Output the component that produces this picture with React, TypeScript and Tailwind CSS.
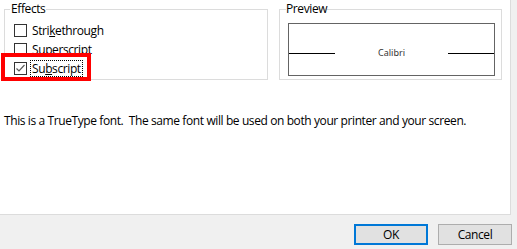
import React from 'react';

const FONT = { fontFamily: '"Open Sans", "Noto Sans", sans-serif' };

function Check({ checked }: { checked?: boolean }) {
  return (
    <span className="flex h-[13px] w-[13px] flex-shrink-0 items-center justify-center border border-[#333333] bg-white">
      {checked && (
        <svg width="11" height="11" viewBox="0 0 11 11" fill="none">
          <polyline points="1.5,5.5 4,8 9.5,2" stroke="#5a5a5a" strokeWidth="1.2" />
        </svg>
      )}
    </span>
  );
}

function Option({ children, checked, focused }: { children: React.ReactNode; checked?: boolean; focused?: boolean }) {
  return (
    <div className="flex h-[19px] items-center gap-[3px] pl-[9px]">
      <Check checked={checked} />
      <span
        className={
          focused
            ? 'border border-dotted border-black px-[1px] leading-[15px]'
            : 'px-[2px] leading-[15px]'
        }
      >
        {children}
      </span>
    </div>
  );
}

export default function App() {
  return (
    <div
      className="relative h-[249px] w-[517px] overflow-hidden bg-[#f0f0f0] text-[12px] tracking-[-0.4px] text-black"
      style={FONT}
    >
      <div className="h-[215px] w-[511px] border-r border-b border-[#dcdcdc] bg-white">
        <div className="flex gap-[11px] pl-[4px] pt-[2px]">
          {/* Effects */}
          <fieldset className="h-[78px] w-[264px] border border-[#dcdcdc] px-0 pt-0">
            <legend className="ml-[5px] px-[1px] leading-[14px]">Effects</legend>
            <div className="pt-[5px]">
              <Option>
                Stri<u>k</u>ethrough
              </Option>
              <Option>Superscript</Option>
              <Option checked focused>
                Su<u>b</u>script
              </Option>
            </div>
          </fieldset>

          {/* Preview */}
          <fieldset className="h-[78px] w-[223px] border border-[#dcdcdc] px-0 pt-0">
            <legend className="ml-[6px] px-0 leading-[14px]">Preview</legend>
            <div className="ml-[8px] mt-[7px] flex h-[53px] w-[207px] items-center border border-[#646464]">
              <div className="mt-[8px] h-px w-[46px] bg-black" />
              <div
                className="flex-1 pt-[6px] text-center text-[9px] tracking-normal text-[#333333]"
                style={{ fontFamily: '"Noto Sans", sans-serif' }}
              >
                Calibri
              </div>
              <div className="mt-[8px] h-px w-[46px] bg-black" />
            </div>
          </fieldset>
        </div>

        <p className="mt-[33px] pl-[4px] leading-[16px]">
          This is a TrueType font.&nbsp; The same font will be used on both your printer and your screen.
        </p>
      </div>

      <div className="flex justify-end gap-[10px] pr-[5px] pt-[9px]">
        <button className="h-[21px] w-[74px] border-2 border-[#0078d7] bg-[#e1e1e1] text-[12px] leading-none">
          OK
        </button>
        <button className="h-[21px] w-[74px] border border-[#adadad] bg-[#e1e1e1] text-[12px] leading-none">
          Cancel
        </button>
      </div>

      {/* red highlight around the Subscript option */}
      <div className="pointer-events-none absolute left-[1px] top-[53px] h-[28px] w-[90px] border-[4px] border-[#ff0000]" />
    </div>
  );
}
